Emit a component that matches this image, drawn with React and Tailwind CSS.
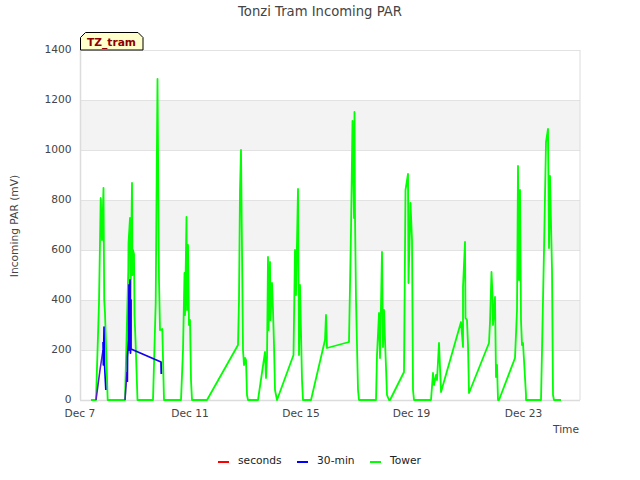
const green = "91,400 96,400 99,303 100.7,198 102,240 103.5,188 104.2,300 105,313 107.7,400 125,400 128.3,270 128.5,243 130,218 130.6,300 132,183 132.4,275 133,250 134,254 134.5,315 135.5,340 137.5,400 153,400 155.7,303 156.5,200 157.5,79 159,280 160,330 162.3,329 164,400 181,400 183,350 184.5,273 185,315 186.5,217 187,310 188,245 189,325 190,320 191,380 192,400 207,400 238,345 239,300 240,190 241,150 242,250 243,350 244,365 245,358 246,360 247,395 248,400 258,400 265,352 266,378 267,358 268,257 268.5,330 270,262 270.5,320 272,283 273,310 274,345 275,390 277,400 293.5,355 295,250 296,295 298,189 299,355 300,285 302,380 303,400 311,400 325,340 326,315 327,348 349,342 351,230 352.5,121 354,218 354.5,112 355,215 356,300 358,390 359,400 376,400 377,355 379,313 380,358 382,252 383,347 384,310 385,340 387,395 389,400 390,400 404,372 405.5,190 408,174 408.5,283 410.5,203 412,240 413,390 414,400 431,400 433,373 434,385 436,375 437,380 439,343 441,392 461,322 463,347 463,287 465,242 465.5,318 467,320 468,345 469,393 489,343 490,322 491.5,272 492.5,295 493,325 495,297 496,377 497,365 498,400 499,400 515,358 517,310 518,166 519,280 520,190 521,320 522,345 523,343 526,395 526,400 541,400 544,250 546,142 548,129 549,248 550,176 552,270 553,395 554,400 561,400";

const purple1 = "96,400 100,370 103,350";
const blue1 = "103,342 103.3,365 104,327 104.5,365 105.8,390";
const purple2 = "125,400 127,372";
const blue2 = "127.3,382 127.5,357 128.5,340 129,285 129.4,350 130,280 130.5,353 131,300 131,349 161,362 161.3,374";

const yTicks = [
  [1400, 50], [1200, 100], [1000, 150], [800, 200], [600, 250], [400, 300], [200, 350], [0, 400],
];
const xTicks = [["Dec 7", 80], ["Dec 11", 190], ["Dec 15", 301], ["Dec 19", 411.5], ["Dec 23", 523.5]];

function LegendItem({ color, label }) {
  return (
    <div className="flex items-center gap-[9px]">
      <span className={`block w-[11px] h-[2px] mt-[1px] ${color}`} />
      <span>{label}</span>
    </div>
  );
}

export default function App() {
  return (
    <div className="w-[640px] h-[480px] bg-white flex flex-col font-['DejaVu_Sans',sans-serif] overflow-hidden">
      <div className="h-[24px] text-center text-[13.2px] leading-[23px] text-[#444444]">Tonzi Tram Incoming PAR</div>
      <svg width="640" height="426" viewBox="0 24 640 426" className="block">
        <rect x="80" y="100" width="500" height="50" fill="#f3f3f3" />
        <rect x="80" y="200" width="500" height="50" fill="#f3f3f3" />
        <rect x="80" y="300" width="500" height="50" fill="#f3f3f3" />
        {yTicks.map(([, y]) => (
          <line key={y} x1="80" x2="580" y1={y + 0.5} y2={y + 0.5} stroke="#e2e2e2" strokeWidth="1" />
        ))}
        <line x1="80.5" x2="80.5" y1="50" y2="400" stroke="#dcdcdc" strokeWidth="1.5" />
        <line x1="580" x2="580" y1="50" y2="400" stroke="#dcdcdc" strokeWidth="1" />
        <line x1="80" x2="580" y1="400.5" y2="400.5" stroke="#dcdcdc" strokeWidth="1.5" />
        <g fontSize="10.67" fill="#444444" fontFamily="'DejaVu Sans',sans-serif">
          {yTicks.map(([v, y]) => (
            <text key={v} x="71.5" y={y + 3} textAnchor="end">{v}</text>
          ))}
          {xTicks.map(([t, x]) => (
            <text key={t} x={x} y="417" textAnchor="middle">{t}</text>
          ))}
          <text x="566" y="433" textAnchor="middle">Time</text>
          <text x="0" y="0" textAnchor="middle" transform="translate(18 226) rotate(-90)">Incoming PAR (mV)</text>
        </g>
        <polyline points={green} fill="none" stroke="#00ff00" strokeWidth="1.8" strokeLinejoin="round" />
        <polyline points={purple1} fill="none" stroke="#5a1fc8" strokeWidth="1.6" />
        <polyline points={purple2} fill="none" stroke="#5a1fc8" strokeWidth="1.6" />
        <polyline points={blue1} fill="none" stroke="#0000ff" strokeWidth="1.6" strokeLinejoin="round" />
        <polyline points={blue2} fill="none" stroke="#1400f0" strokeWidth="1.8" strokeLinejoin="round" />
        <path d="M80.5 50 V37.5 L85.5 32.5 H138 L143 37.5 V50 Z" fill="#ffffcc" stroke="#000000" strokeWidth="1" />
        <text x="87" y="46" fontSize="10.67" fontWeight="700" fill="#8b0000" fontFamily="'DejaVu Sans',sans-serif">TZ_tram</text>
      </svg>
      <div className="flex justify-center items-center gap-[15.5px] h-[22px] text-[10.67px] text-[#222222] pr-[1px]">
        <LegendItem color="bg-[#ff0000]" label="seconds" />
        <LegendItem color="bg-[#0000ff]" label="30-min" />
        <LegendItem color="bg-[#00ff00]" label="Tower" />
      </div>
    </div>
  );
}
